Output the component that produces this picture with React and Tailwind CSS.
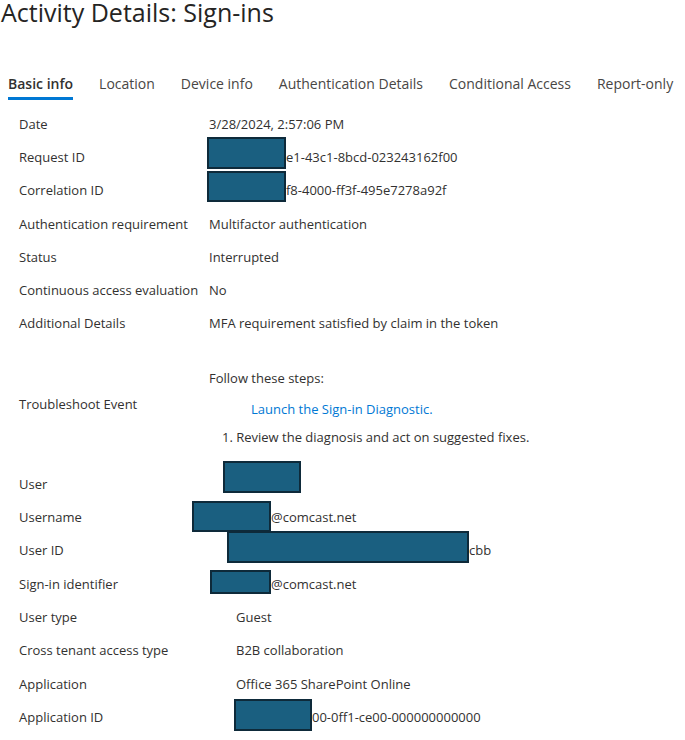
import React from "react";

const Box = ({ className }) => (
  <div
    className={
      "absolute bg-[#1a5f80] border-2 border-[#0e2a3a] " + className
    }
  />
);

const Row = ({ label, children }) => (
  <div className="flex items-center h-[33.3px] whitespace-nowrap">
    <div className="w-[209px] shrink-0 pl-[19px]">{label}</div>
    <div className="relative h-[20px]">{children}</div>
  </div>
);

const URow = ({ label, children }) => (
  <div className="flex items-center h-[33.3px] whitespace-nowrap">
    <div className="w-[236px] shrink-0 pl-[19px]">{label}</div>
    <div className="relative h-[20px]">{children}</div>
  </div>
);

export default function App() {
  const tabs = [
    "Basic info",
    "Location",
    "Device info",
    "Authentication Details",
    "Conditional Access",
    "Report-only",
  ];
  return (
    <div className="w-[685px] h-[740px] overflow-hidden bg-white text-[#323130] font-['Open_Sans',sans-serif]">
      <h1 className="text-[25px] leading-[24px] pl-[1px] pt-[0px] text-[#252423]">
        Activity Details: Sign-ins
      </h1>
      <div className="flex gap-[26px] pl-[8px] mt-[50px] text-[14px] leading-[20px] whitespace-nowrap">
        {tabs.map((t, i) => (
          <div
            key={t}
            className={
              i === 0
                ? "pb-[3px] border-b-[3px] border-[#0078d4] font-semibold text-[#323130]"
                : "pb-[3px] border-b-[3px] border-transparent text-[#484644]"
            }
          >
            {t}
          </div>
        ))}
      </div>

      <div className="mt-[7px] text-[13px] leading-[20px]">
        <Row label="Date">3/28/2024, 2:57:06 PM</Row>
        <Row label="Request ID">
          <Box className="left-[-1.7px] top-[-9.7px] w-[78.7px] h-[31.4px]" />
          <span className="pl-[77px]">e1-43c1-8bcd-023243162f00</span>
        </Row>
        <Row label="Correlation ID">
          <Box className="left-[-1.7px] top-[-9.3px] w-[78.7px] h-[31.3px]" />
          <span className="pl-[77px]">f8-4000-ff3f-495e7278a92f</span>
        </Row>
        <Row label="Authentication requirement">Multifactor authentication</Row>
        <Row label="Status">Interrupted</Row>
        <Row label="Continuous access evaluation">No</Row>
        <Row label="Additional Details">
          MFA requirement satisfied by claim in the token
        </Row>

        <div className="flex whitespace-nowrap">
          <div className="w-[209px] shrink-0 pl-[19px] pt-[54px]">
            Troubleshoot Event
          </div>
          <div className="pt-[28px]">
            <div>Follow these steps:</div>
            <div className="mt-[11px] pl-[42px] text-[#0078d4]">
              Launch the Sign-in Diagnostic.
            </div>
            <div className="mt-[8px] pl-[13px]">
              1. Review the diagnosis and act on suggested fixes.
            </div>
          </div>
        </div>

        <div className="mt-[20px]">
          <URow label="User">
            <Box className="left-[-12.7px] top-[-12.3px] w-[77.7px] h-[31.3px]" />
          </URow>
          <URow label="Username">
            <Box className="left-[-43.7px] top-[-6px] w-[78.7px] h-[30.7px]" />
            <span className="pl-[35px]">@comcast.net</span>
          </URow>
          <URow label="User ID">
            <Box className="left-[-9px] top-[-9px] w-[242px] h-[31.3px]" />
            <span className="pl-[233px]">cbb</span>
          </URow>
          <URow label="Sign-in identifier">
            <Box className="left-[-26px] top-[-3.7px] w-[61px] h-[24px]" />
            <span className="pl-[35px]">@comcast.net</span>
          </URow>
          <URow label="User type">Guest</URow>
          <URow label="Cross tenant access type">B2B collaboration</URow>
          <URow label="Application">Office 365 SharePoint Online</URow>
          <URow label="Application ID">
            <Box className="left-[-2px] top-[-7.7px] w-[77.7px] h-[31.4px]" />
            <span className="pl-[76px]">00-0ff1-ce00-000000000000</span>
          </URow>
        </div>
      </div>
    </div>
  );
}
